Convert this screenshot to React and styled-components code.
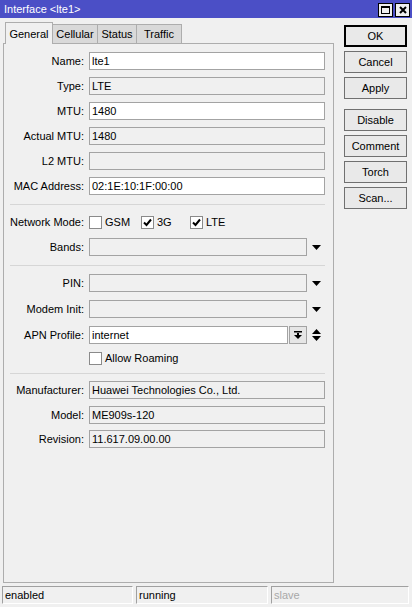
import styled, { createGlobalStyle } from "styled-components";

const GlobalStyle = createGlobalStyle`
  html, body {
    margin: 0;
    padding: 0;
    background: #f0f0f0;
  }
  body {
    font-family: "Liberation Sans", Arial, sans-serif;
    font-size: 11px;
    color: #000;
  }
  * {
    box-sizing: border-box;
  }
`;

const Window = styled.div`
  width: 412px;
  height: 607px;
  display: flex;
  flex-direction: column;
  background: #f0f0f0;
  overflow: hidden;
`;

const TitleBar = styled.div`
  height: 18px;
  flex: none;
  background: #4b4fc6;
  color: #ffffff;
  display: flex;
  align-items: center;
  justify-content: space-between;
  padding: 0 2px 0 4px;
  font-size: 11px;
`;

const TitleButtons = styled.div`
  display: flex;
  gap: 2px;
  padding-top: 1px;
`;

const TitleButton = styled.div`
  width: 15px;
  height: 14px;
  background: #f0f0f0;
  border: 1px solid #000;
  display: flex;
  align-items: center;
  justify-content: center;
`;

const Body = styled.div`
  flex: 1;
  display: flex;
`;

const LeftColumn = styled.div`
  width: 331px;
  margin-left: 3px;
  padding-top: 4px;
  display: flex;
  flex-direction: column;
`;

const Tabs = styled.div`
  height: 21px;
  display: flex;
  align-items: flex-end;
  padding-left: 2px;
`;

const Tab = styled.div`
  width: ${(p) => p.$w}px;
  height: ${(p) => (p.$active ? 22 : 19)}px;
  margin-bottom: ${(p) => (p.$active ? -1 : 0)}px;
  position: relative;
  z-index: ${(p) => (p.$active ? 1 : 0)};
  background: ${(p) => (p.$active ? "#f0f0f0" : "#d9d9d9")};
  border: 1px solid #adadad;
  border-bottom: none;
  border-left: ${(p) => (p.$first ? "1px solid #adadad" : "none")};
  display: flex;
  align-items: center;
  justify-content: center;
`;

const Panel = styled.div`
  height: 540px;
  border: 1px solid #adadad;
  padding-top: 8px;
  display: flex;
  flex-direction: column;
`;

const Row = styled.div`
  display: flex;
  align-items: center;
  height: 18px;
  margin-top: ${(p) => p.$mt ?? 7}px;
`;

const Label = styled.div`
  width: 80px;
  margin-right: 5px;
  text-align: right;
  white-space: nowrap;
`;

const Field = styled.div`
  width: ${(p) => p.$w ?? 236}px;
  height: 18px;
  border: 1px solid #a3a3a3;
  background: ${(p) => (p.$editable ? "#ffffff" : "#f0f0f0")};
  padding-left: 2px;
  display: flex;
  align-items: center;
  white-space: nowrap;
  overflow: hidden;
`;

const ArrowSlot = styled.div`
  width: 18px;
  height: 18px;
  display: flex;
  align-items: center;
  justify-content: center;
`;

const SmallButton = styled.div`
  width: 18px;
  height: 18px;
  margin-left: 1px;
  border: 1px solid #a3a3a3;
  background: #e6e6e6;
  display: flex;
  align-items: center;
  justify-content: center;
`;

const Separator = styled.div`
  height: 1px;
  width: 315px;
  margin: ${(p) => p.$mt ?? 9}px 0 ${(p) => p.$mb ?? 8}px 6px;
  background: #d6d6d6;
`;

const CheckGroup = styled.div`
  display: flex;
  align-items: center;
`;

const CheckItem = styled.div`
  display: flex;
  align-items: center;
  width: ${(p) => (p.$w ? `${p.$w}px` : "auto")};
`;

const Box = styled.div`
  width: 13px;
  height: 13px;
  border: 1px solid #8a8a8a;
  background: #ffffff;
  margin-right: 3px;
  display: flex;
  align-items: center;
  justify-content: center;
`;

const RightColumn = styled.div`
  margin-left: 10px;
  padding-top: 7px;
  display: flex;
  flex-direction: column;
`;

const Button = styled.div`
  width: 63px;
  height: 22px;
  margin-bottom: ${(p) => p.$mb ?? 4}px;
  border: 1px solid #707070;
  background: #e9e9e9;
  display: flex;
  align-items: center;
  justify-content: center;
  ${(p) => p.$default && "border: 2px solid #000;"}
`;

const StatusBar = styled.div`
  height: 25px;
  flex: none;
  display: flex;
  gap: 3px;
  padding: 3px 3px 4px 2px;
`;

const StatusCell = styled.div`
  width: ${(p) => p.$w}px;
  height: 18px;
  border-top: 1px solid #a0a0a0;
  border-left: 1px solid #a0a0a0;
  border-bottom: 1px solid #ffffff;
  border-right: 1px solid #ffffff;
  padding-left: 2px;
  display: flex;
  align-items: center;
  color: ${(p) => (p.$dim ? "#a8a8a8" : "#000")};
`;

const DownArrow = () => (
  <svg width="9" height="5" viewBox="0 0 9 5">
    <polygon points="0,0 9,0 4.5,5" fill="#000" />
  </svg>
);

const UpDown = () => (
  <svg width="9" height="12" viewBox="0 0 9 12">
    <polygon points="0,5 9,5 4.5,0" fill="#000" />
    <polygon points="0,7 9,7 4.5,12" fill="#000" />
  </svg>
);

const BarDown = () => (
  <svg width="8" height="8" viewBox="0 0 8 8">
    <rect x="0" y="0" width="8" height="1.5" fill="#000" />
    <rect x="3" y="2" width="2" height="2" fill="#000" />
    <polygon points="0,4 8,4 4,8" fill="#000" />
  </svg>
);

const Check = () => (
  <svg width="9" height="9" viewBox="0 0 9 9">
    <path d="M1 4.5 L3.5 7 L8 1.5" stroke="#000" strokeWidth="2" fill="none" />
  </svg>
);

function CheckBox({ checked, label, w }) {
  return (
    <CheckItem $w={w}>
      <Box>{checked && <Check />}</Box>
      {label}
    </CheckItem>
  );
}

function TextRow({ label, value, editable, mt }) {
  return (
    <Row $mt={mt}>
      <Label>{label}</Label>
      <Field $editable={editable}>{value}</Field>
    </Row>
  );
}

function DropRow({ label, mt }) {
  return (
    <Row $mt={mt}>
      <Label>{label}</Label>
      <Field $w={218} />
      <ArrowSlot>
        <DownArrow />
      </ArrowSlot>
    </Row>
  );
}

export default function App() {
  return (
    <Window>
      <GlobalStyle />
      <TitleBar>
        <span>Interface &lt;lte1&gt;</span>
        <TitleButtons>
          <TitleButton>
            <svg width="9" height="8" viewBox="0 0 9 8">
              <rect x="0.5" y="0.5" width="8" height="7" fill="none" stroke="#000" />
              <rect x="0" y="0" width="9" height="2" fill="#000" />
            </svg>
          </TitleButton>
          <TitleButton>
            <svg width="8" height="8" viewBox="0 0 8 8">
              <path d="M1 1 L7 7 M7 1 L1 7" stroke="#000" strokeWidth="2" />
            </svg>
          </TitleButton>
        </TitleButtons>
      </TitleBar>
      <Body>
        <LeftColumn>
          <Tabs>
            <Tab $w={48} $active $first>General</Tab>
            <Tab $w={45}>Cellular</Tab>
            <Tab $w={39}>Status</Tab>
            <Tab $w={45}>Traffic</Tab>
          </Tabs>
          <Panel>
            <TextRow label="Name:" value="lte1" editable mt={0} />
            <TextRow label="Type:" value="LTE" />
            <TextRow label="MTU:" value="1480" editable />
            <TextRow label="Actual MTU:" value="1480" />
            <TextRow label="L2 MTU:" value="" />
            <TextRow label="MAC Address:" value="02:1E:10:1F:00:00" editable />
            <Separator />
            <Row $mt={0}>
              <Label>Network Mode:</Label>
              <CheckGroup>
                <CheckBox label="GSM" w={52} />
                <CheckBox label="3G" checked w={49} />
                <CheckBox label="LTE" checked />
              </CheckGroup>
            </Row>
            <DropRow label="Bands:" />
            <Separator />
            <DropRow label="PIN:" mt={0} />
            <DropRow label="Modem Init:" mt={8} />
            <Row $mt={8}>
              <Label>APN Profile:</Label>
              <Field $w={199} $editable>
                internet
              </Field>
              <SmallButton>
                <BarDown />
              </SmallButton>
              <ArrowSlot>
                <UpDown />
              </ArrowSlot>
            </Row>
            <Row $mt={5}>
              <Label />
              <CheckBox label="Allow Roaming" />
            </Row>
            <Separator $mt={6} $mb={7} />
            <TextRow label="Manufacturer:" value="Huawei Technologies Co., Ltd." mt={0} />
            <TextRow label="Model:" value="ME909s-120" />
            <TextRow label="Revision:" value="11.617.09.00.00" mt={6} />
          </Panel>
        </LeftColumn>
        <RightColumn>
          <Button $default>OK</Button>
          <Button>Cancel</Button>
          <Button $mb={10}>Apply</Button>
          <Button>Disable</Button>
          <Button>Comment</Button>
          <Button>Torch</Button>
          <Button>Scan...</Button>
        </RightColumn>
      </Body>
      <StatusBar>
        <StatusCell $w={131}>enabled</StatusCell>
        <StatusCell $w={132}>running</StatusCell>
        <StatusCell $w={138} $dim>
          slave
        </StatusCell>
      </StatusBar>
    </Window>
  );
}
